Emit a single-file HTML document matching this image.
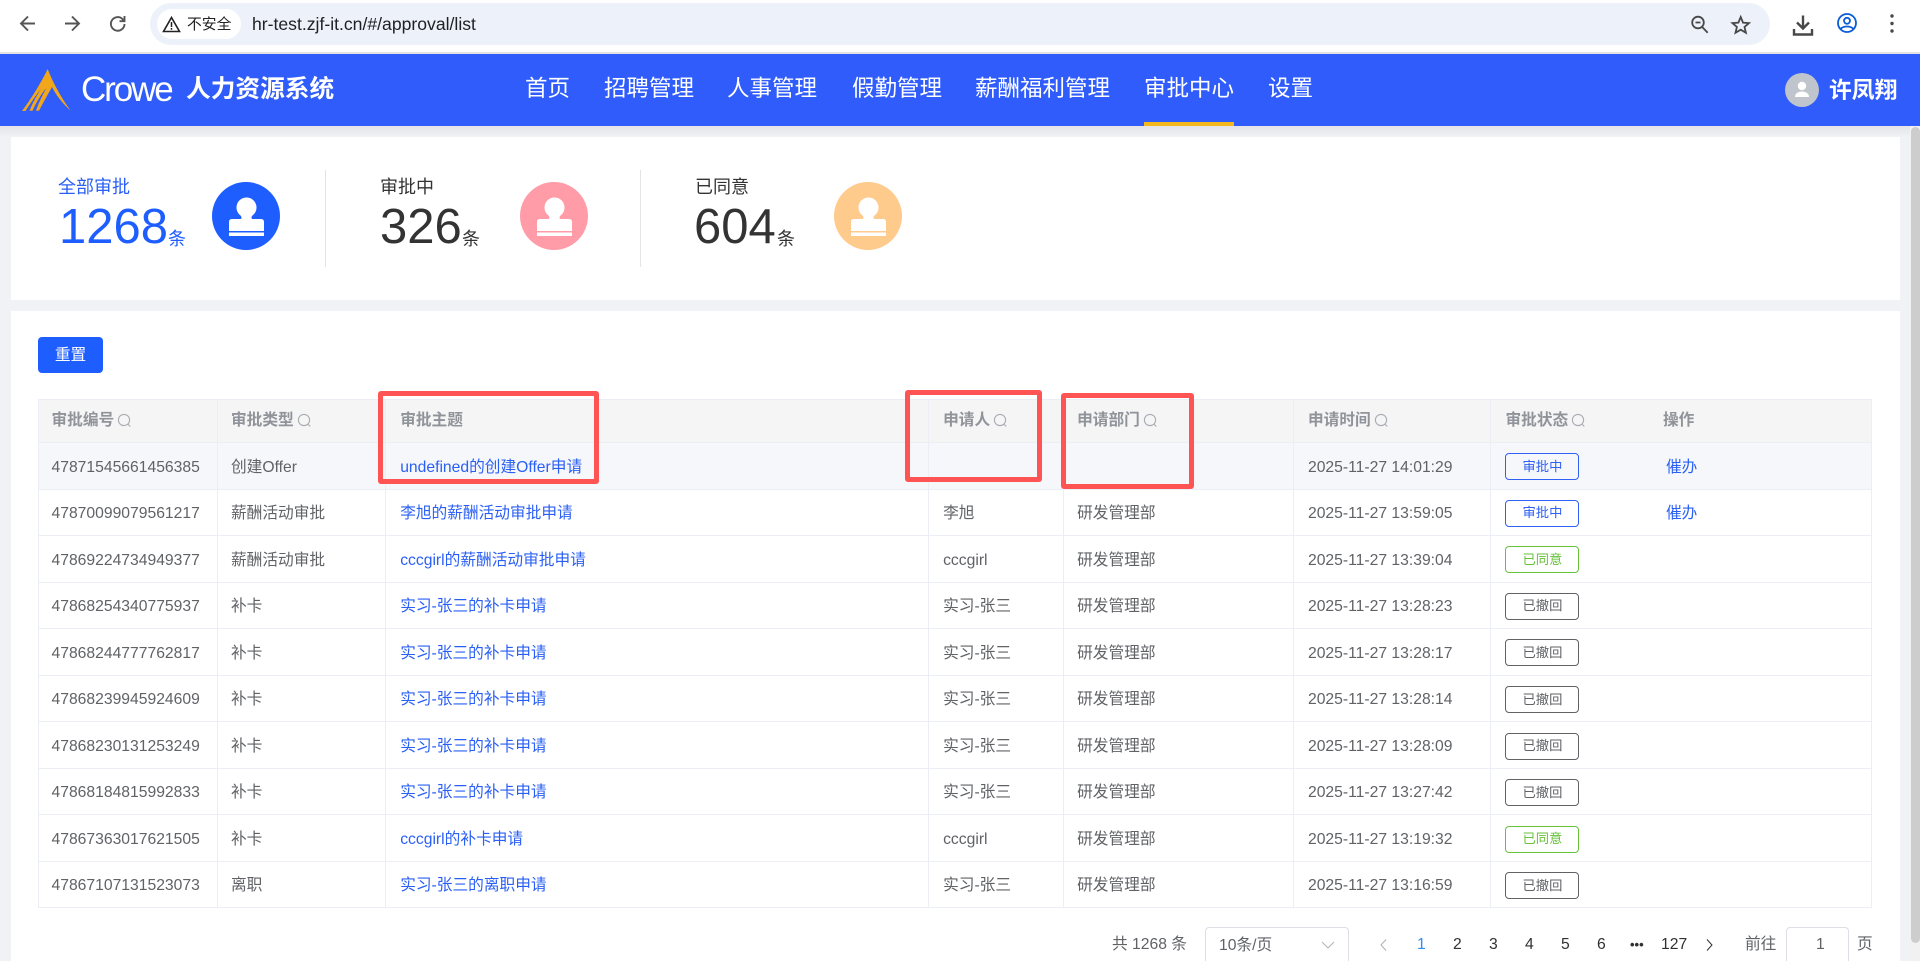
<!DOCTYPE html>
<html lang="zh-CN"><head><meta charset="utf-8"><title>审批列表</title>
<style>
*{box-sizing:border-box}
html,body{margin:0;padding:0;width:1920px;height:961px;overflow:hidden;background:#f0f2f5;font-family:"Liberation Sans","Noto Sans CJK SC",sans-serif;color:#606266}
#root{position:relative;width:1920px;height:961px;overflow:hidden;background:#f0f2f5}
.a{position:absolute;white-space:nowrap}
#top{position:absolute;left:0;top:0;width:1920px;height:52px;background:#fff}
#line{position:absolute;left:0;top:52px;width:1920px;height:2px;background:#e3e3e3}
#url{position:absolute;left:150px;top:3px;width:1620px;height:42px;border-radius:21px;background:#edf2fa}
#chip{position:absolute;left:157px;top:9px;width:84px;height:30px;border-radius:15px;background:#fff}
#hd{position:absolute;left:0;top:54px;width:1920px;height:72px;background:#2f5cfa}
#sh{position:absolute;left:0;top:126px;width:1920px;height:11px;background:linear-gradient(#e2e4e8,#f0f2f5)}
.nav{position:absolute;top:73px;font-size:22.5px;line-height:32px;color:#fff;white-space:nowrap}
.card{position:absolute;left:11px;width:1889px;background:#fff}
.g{position:absolute;display:grid;left:38px;width:1834px;grid-template-columns:178.5px 168.2px 542.9px 135px 230.9px 196.5px 158px 224px;font-size:15.7px;line-height:22px;border-left:1px solid #ebeef5;border-right:1px solid #ebeef5;border-bottom:1.5px solid #ebeef5;height:46.55px;align-items:center}
.g>div{height:100%;display:flex;align-items:center;padding-left:13.5px;padding-top:3.5px;border-right:1.5px solid #ebeef5;white-space:nowrap}
.g>div:nth-child(1){padding-left:12.5px}
.g>div:nth-child(3),.g>div:nth-child(4){padding-left:14.5px}
.g>div:nth-child(7){padding-left:14.5px;border-right:0}
.g>div:last-child{border-right:0}
.th{background:#f5f5f5;color:#909399;font-weight:700;height:44px;border-top:1px solid #ebeef5}
.th>div{padding-top:0}
.th svg{margin-left:3px;margin-top:-2px}
.lk{color:#2a5ff5}
.tag{width:74px;height:27px;margin-top:-1.5px;border:1.3px solid #3060f5;border-radius:4px;color:#3060f5;font-size:13.3px;display:flex;align-items:center;justify-content:center}
.tag.g2{border-color:#67c23a;color:#67c23a}
.tag.b{border-color:#606266;color:#606266}
.red{position:absolute;border:5px solid #fe5454;border-radius:3px}
.pg{position:absolute;top:934px;font-size:15.7px;line-height:22px;color:#303133;white-space:nowrap}
.lab{position:absolute;top:173px;font-size:18px;line-height:28px;color:#333}
.num{position:absolute;top:197px;font-size:49px;line-height:60px;color:#333}
.unit{position:absolute;top:226px;font-size:18px;line-height:26px;color:#333}
</style></head><body><div id="root">

<div id="top"></div><div id="line"></div><div id="url"></div><div id="chip"></div>
<svg class="a" style="left:0;top:0" width="150" height="52" fill="none" stroke="#555" stroke-width="1.900">
<path d="M35 23.500H21M28 16.500l-7 7 7 7"/><path d="M65 23.500H79M72 16.500l7 7-7 7"/>
<path d="M124.500 24a6.800 6.800 0 1 1-2.100-5L124.500 21M124.500 16V21.200H119.500"/></svg>
<svg class="a" style="left:162px;top:15px" width="20" height="18" fill="none"><path d="M9.500 2.500L17.500 16.500H1.500z" stroke="#222" stroke-width="1.600"/><path d="M9.500 7v5M9.500 13v1.800" stroke="#222" stroke-width="1.500"/></svg>
<div class="a" style="left:187px;top:13px;font-size:14.800px;line-height:24px;color:#222">不安全</div>
<div class="a" style="left:252px;top:11px;font-size:17.600px;line-height:26px;color:#202124">hr-test.zjf-it.cn/#/approval/list</div>
<svg class="a" style="left:1685px;top:8px" width="230" height="36" fill="none" stroke="#484848" stroke-width="1.800">
<circle cx="13" cy="14.500" r="5.800"/><path d="M10.500 14.500h5M17.200 19l5.500 5.800"/>
<path d="M55.700 9l2.300 5.600 6 .5-4.500 3.900 1.400 5.800-5.200-3.100-5.200 3.100 1.400-5.800-4.500-3.900 6-.5z"/>
<path d="M118 7.500v12.500M112 14.500l6 6 6-6" stroke-width="2.400"/><path d="M109 21v5.500h18V21" stroke-width="2.400"/>
<circle cx="162" cy="15" r="9" stroke="#0b5cd8"/><circle cx="162" cy="12.800" r="3" stroke="#0b5cd8"/><path d="M155.500 21c3-3.300 10-3.300 13 0" stroke="#0b5cd8"/>
<circle cx="207" cy="8" r="1.700" fill="#484848" stroke="none"/><circle cx="207" cy="15.500" r="1.700" fill="#484848" stroke="none"/><circle cx="207" cy="23" r="1.700" fill="#484848" stroke="none"/></svg>

<div id="hd"></div><div id="sh"></div>
<svg class="a" style="left:20px;top:66px" width="56" height="48">
<path d="M27.700 3C33 17 42 33 50.700 44.700 42 37 36 29 32 21 28 28 23 37 19 44.700L16 44.700C19 36 23 28 26.500 22 21 28 16 37 12.500 44.700L9.500 44.700C13 36 17 29 21 23 16 29 10 38 5.500 45L2 45C11 33 21 17 27.700 3Z" fill="#f2a71b"/></svg>
<div class="a" style="left:81px;top:68px;font-size:35px;line-height:44px;color:#fff;letter-spacing:-2.100px">Crowe</div>
<div class="a" style="left:186px;top:72px;font-size:24.700px;line-height:36px;color:#fff;font-weight:700">人力资源系统</div>
<div class="nav" style="left:525px">首页</div>
<div class="nav" style="left:604px">招聘管理</div>
<div class="nav" style="left:727px">人事管理</div>
<div class="nav" style="left:852px">假勤管理</div>
<div class="nav" style="left:975px">薪酬福利管理</div>
<div class="nav" style="left:1144px">审批中心</div>
<div class="nav" style="left:1268px">设置</div>
<div class="a" style="left:1144px;top:122px;width:90px;height:4px;background:#f5b81c"></div>
<svg class="a" style="left:1785px;top:73px" width="34" height="34"><circle cx="17" cy="17" r="17" fill="#c0c4cc"/><circle cx="17" cy="13" r="4.200" fill="#fff"/><path d="M10 24c0-3.500 3-5.500 7-5.500s7 2 7 5.500z" fill="#fff"/></svg>
<div class="a" style="left:1829px;top:73px;font-size:22.800px;line-height:34px;color:#fff;font-weight:700">许凤翔</div>

<div class="card" style="top:137px;height:163px"></div>
<div class="card" style="top:311px;height:650px"></div>

<div class="lab" style="left:58px;color:#2a5ff5">全部审批</div>
<div class="num" style="left:59px;color:#1e5eff">1268</div>
<div class="unit" style="left:168px;color:#1e5eff">条</div>
<svg class="a" style="left:212px;top:182px" width="68" height="68"><circle cx="34" cy="34" r="34" fill="#1e5eff"/><path d="M34.500 15.500a10 10 0 0 1 6 18c-1.300 1-1.300 3.500 0 3.500H49q3 0 3 3v9H17v-9q0-3 3-3h8.500c1.300 0 1.300-2.500 0-3.500a10 10 0 0 1 6-18zM17 50.500h35V54H17z" fill="#fff"/></svg>
<div class="a" style="left:325px;top:170px;width:1px;height:97px;background:#e4e4e4"></div>

<div class="lab" style="left:380px">审批中</div>
<div class="num" style="left:380px">326</div>
<div class="unit" style="left:462px">条</div>
<svg class="a" style="left:520px;top:182px" width="68" height="68"><circle cx="34" cy="34" r="34" fill="#ff9ca8"/><path d="M34.500 15.500a10 10 0 0 1 6 18c-1.300 1-1.300 3.500 0 3.500H49q3 0 3 3v9H17v-9q0-3 3-3h8.500c1.300 0 1.300-2.500 0-3.500a10 10 0 0 1 6-18zM17 50.500h35V54H17z" fill="#fff"/></svg>
<div class="a" style="left:640px;top:170px;width:1px;height:97px;background:#e4e4e4"></div>

<div class="lab" style="left:695px">已同意</div>
<div class="num" style="left:694px">604</div>
<div class="unit" style="left:777px">条</div>
<svg class="a" style="left:834px;top:182px" width="68" height="68"><circle cx="34" cy="34" r="34" fill="#ffcb8c"/><path d="M34.500 15.500a10 10 0 0 1 6 18c-1.300 1-1.300 3.500 0 3.500H49q3 0 3 3v9H17v-9q0-3 3-3h8.500c1.300 0 1.300-2.500 0-3.500a10 10 0 0 1 6-18zM17 50.500h35V54H17z" fill="#fff"/></svg>

<div class="a" style="left:38px;top:337px;width:65px;height:36px;border-radius:4px;background:#1e5eff;color:#fff;font-size:15.700px;line-height:37px;text-align:center">重置</div>

<svg width="0" height="0" style="position:absolute"><defs><g id="q"><circle cx="7" cy="7" r="5.600" fill="none" stroke="#a8abb2" stroke-width="1.100"/><path d="M10.800 11l2.500 2.500" stroke="#a8abb2" stroke-width="1.100"/></g></defs></svg>

<div class="g th" style="top:399px"><div>审批编号<svg width="15" height="15"><use href="#q"/></svg></div><div>审批类型<svg width="15" height="15"><use href="#q"/></svg></div><div>审批主题</div><div>申请人<svg width="15" height="15"><use href="#q"/></svg></div><div>申请部门<svg width="15" height="15"><use href="#q"/></svg></div><div>申请时间<svg width="15" height="15"><use href="#q"/></svg></div><div>审批状态<svg width="15" height="15"><use href="#q"/></svg></div><div style="padding-left:14px">操作</div></div>

<div class="g" style="top:443px;background:#f5f7fb"><div>47871545661456385</div><div>创建Offer</div><div class="lk">undefined的创建Offer申请</div><div></div><div></div><div>2025-11-27 14:01:29</div><div><span class="tag">审批中</span></div><div style="padding-left:17px"><span class="lk">催办</span></div></div>
<div class="g" style="top:489.550px"><div>47870099079561217</div><div>薪酬活动审批</div><div class="lk">李旭的薪酬活动审批申请</div><div>李旭</div><div>研发管理部</div><div>2025-11-27 13:59:05</div><div><span class="tag">审批中</span></div><div style="padding-left:17px"><span class="lk">催办</span></div></div>
<div class="g" style="top:536.100px"><div>47869224734949377</div><div>薪酬活动审批</div><div class="lk">cccgirl的薪酬活动审批申请</div><div>cccgirl</div><div>研发管理部</div><div>2025-11-27 13:39:04</div><div><span class="tag g2">已同意</span></div><div></div></div>
<div class="g" style="top:582.650px"><div>47868254340775937</div><div>补卡</div><div class="lk">实习-张三的补卡申请</div><div>实习-张三</div><div>研发管理部</div><div>2025-11-27 13:28:23</div><div><span class="tag b">已撤回</span></div><div></div></div>
<div class="g" style="top:629.200px"><div>47868244777762817</div><div>补卡</div><div class="lk">实习-张三的补卡申请</div><div>实习-张三</div><div>研发管理部</div><div>2025-11-27 13:28:17</div><div><span class="tag b">已撤回</span></div><div></div></div>
<div class="g" style="top:675.750px"><div>47868239945924609</div><div>补卡</div><div class="lk">实习-张三的补卡申请</div><div>实习-张三</div><div>研发管理部</div><div>2025-11-27 13:28:14</div><div><span class="tag b">已撤回</span></div><div></div></div>
<div class="g" style="top:722.300px"><div>47868230131253249</div><div>补卡</div><div class="lk">实习-张三的补卡申请</div><div>实习-张三</div><div>研发管理部</div><div>2025-11-27 13:28:09</div><div><span class="tag b">已撤回</span></div><div></div></div>
<div class="g" style="top:768.850px"><div>47868184815992833</div><div>补卡</div><div class="lk">实习-张三的补卡申请</div><div>实习-张三</div><div>研发管理部</div><div>2025-11-27 13:27:42</div><div><span class="tag b">已撤回</span></div><div></div></div>
<div class="g" style="top:815.400px"><div>47867363017621505</div><div>补卡</div><div class="lk">cccgirl的补卡申请</div><div>cccgirl</div><div>研发管理部</div><div>2025-11-27 13:19:32</div><div><span class="tag g2">已同意</span></div><div></div></div>
<div class="g" style="top:861.950px"><div>47867107131523073</div><div>离职</div><div class="lk">实习-张三的离职申请</div><div>实习-张三</div><div>研发管理部</div><div>2025-11-27 13:16:59</div><div><span class="tag b">已撤回</span></div><div></div></div>

<div class="red" style="left:378px;top:391px;width:221px;height:93px"></div>
<div class="red" style="left:905px;top:390px;width:137px;height:92px"></div>
<div class="red" style="left:1061px;top:393px;width:133px;height:96px"></div>

<div class="pg" style="left:1112px;color:#606266">共 1268 条</div>
<div class="a" style="left:1205px;top:927px;width:144px;height:50px;border:1px solid #dcdfe6;border-radius:4px"></div>
<div class="pg" style="left:1219px;color:#606266;top:935px">10条/页</div>
<svg class="a" style="left:1320px;top:941px" width="16" height="10" fill="none" stroke="#b0b3b8" stroke-width="1"><path d="M2 1l6 6 6-6"/></svg>
<svg class="a" style="left:1379px;top:938px" width="10" height="14" fill="none" stroke="#b0b3b8" stroke-width="1.100"><path d="M7 1.500L2 7l5 5.500"/></svg>
<div class="pg" style="left:1417px;color:#2f8cf5">1</div>
<div class="pg" style="left:1453px">2</div>
<div class="pg" style="left:1489px">3</div>
<div class="pg" style="left:1525px">4</div>
<div class="pg" style="left:1561px">5</div>
<div class="pg" style="left:1597px">6</div>
<div class="pg" style="left:1630px;font-weight:700;top:934px;font-size:13px">•••</div>
<div class="pg" style="left:1661px">127</div>
<svg class="a" style="left:1704px;top:938px" width="10" height="14" fill="none" stroke="#303133" stroke-width="1"><path d="M3 1.500L8 7l-5 5.500"/></svg>
<div class="pg" style="left:1745px;color:#606266">前往</div>
<div class="a" style="left:1786px;top:927px;width:63px;height:50px;border:1px solid #dcdfe6;border-radius:4px"></div>
<div class="pg" style="left:1816px;color:#606266">1</div>
<div class="pg" style="left:1857px;color:#606266">页</div>

<div class="a" style="left:1910px;top:126px;width:10px;height:835px;background:#f1f1f1"></div>
<div class="a" style="left:1911px;top:127px;width:9px;height:816px;border-radius:4.500px;background:#cdcdcd"></div>
</div></body></html>
